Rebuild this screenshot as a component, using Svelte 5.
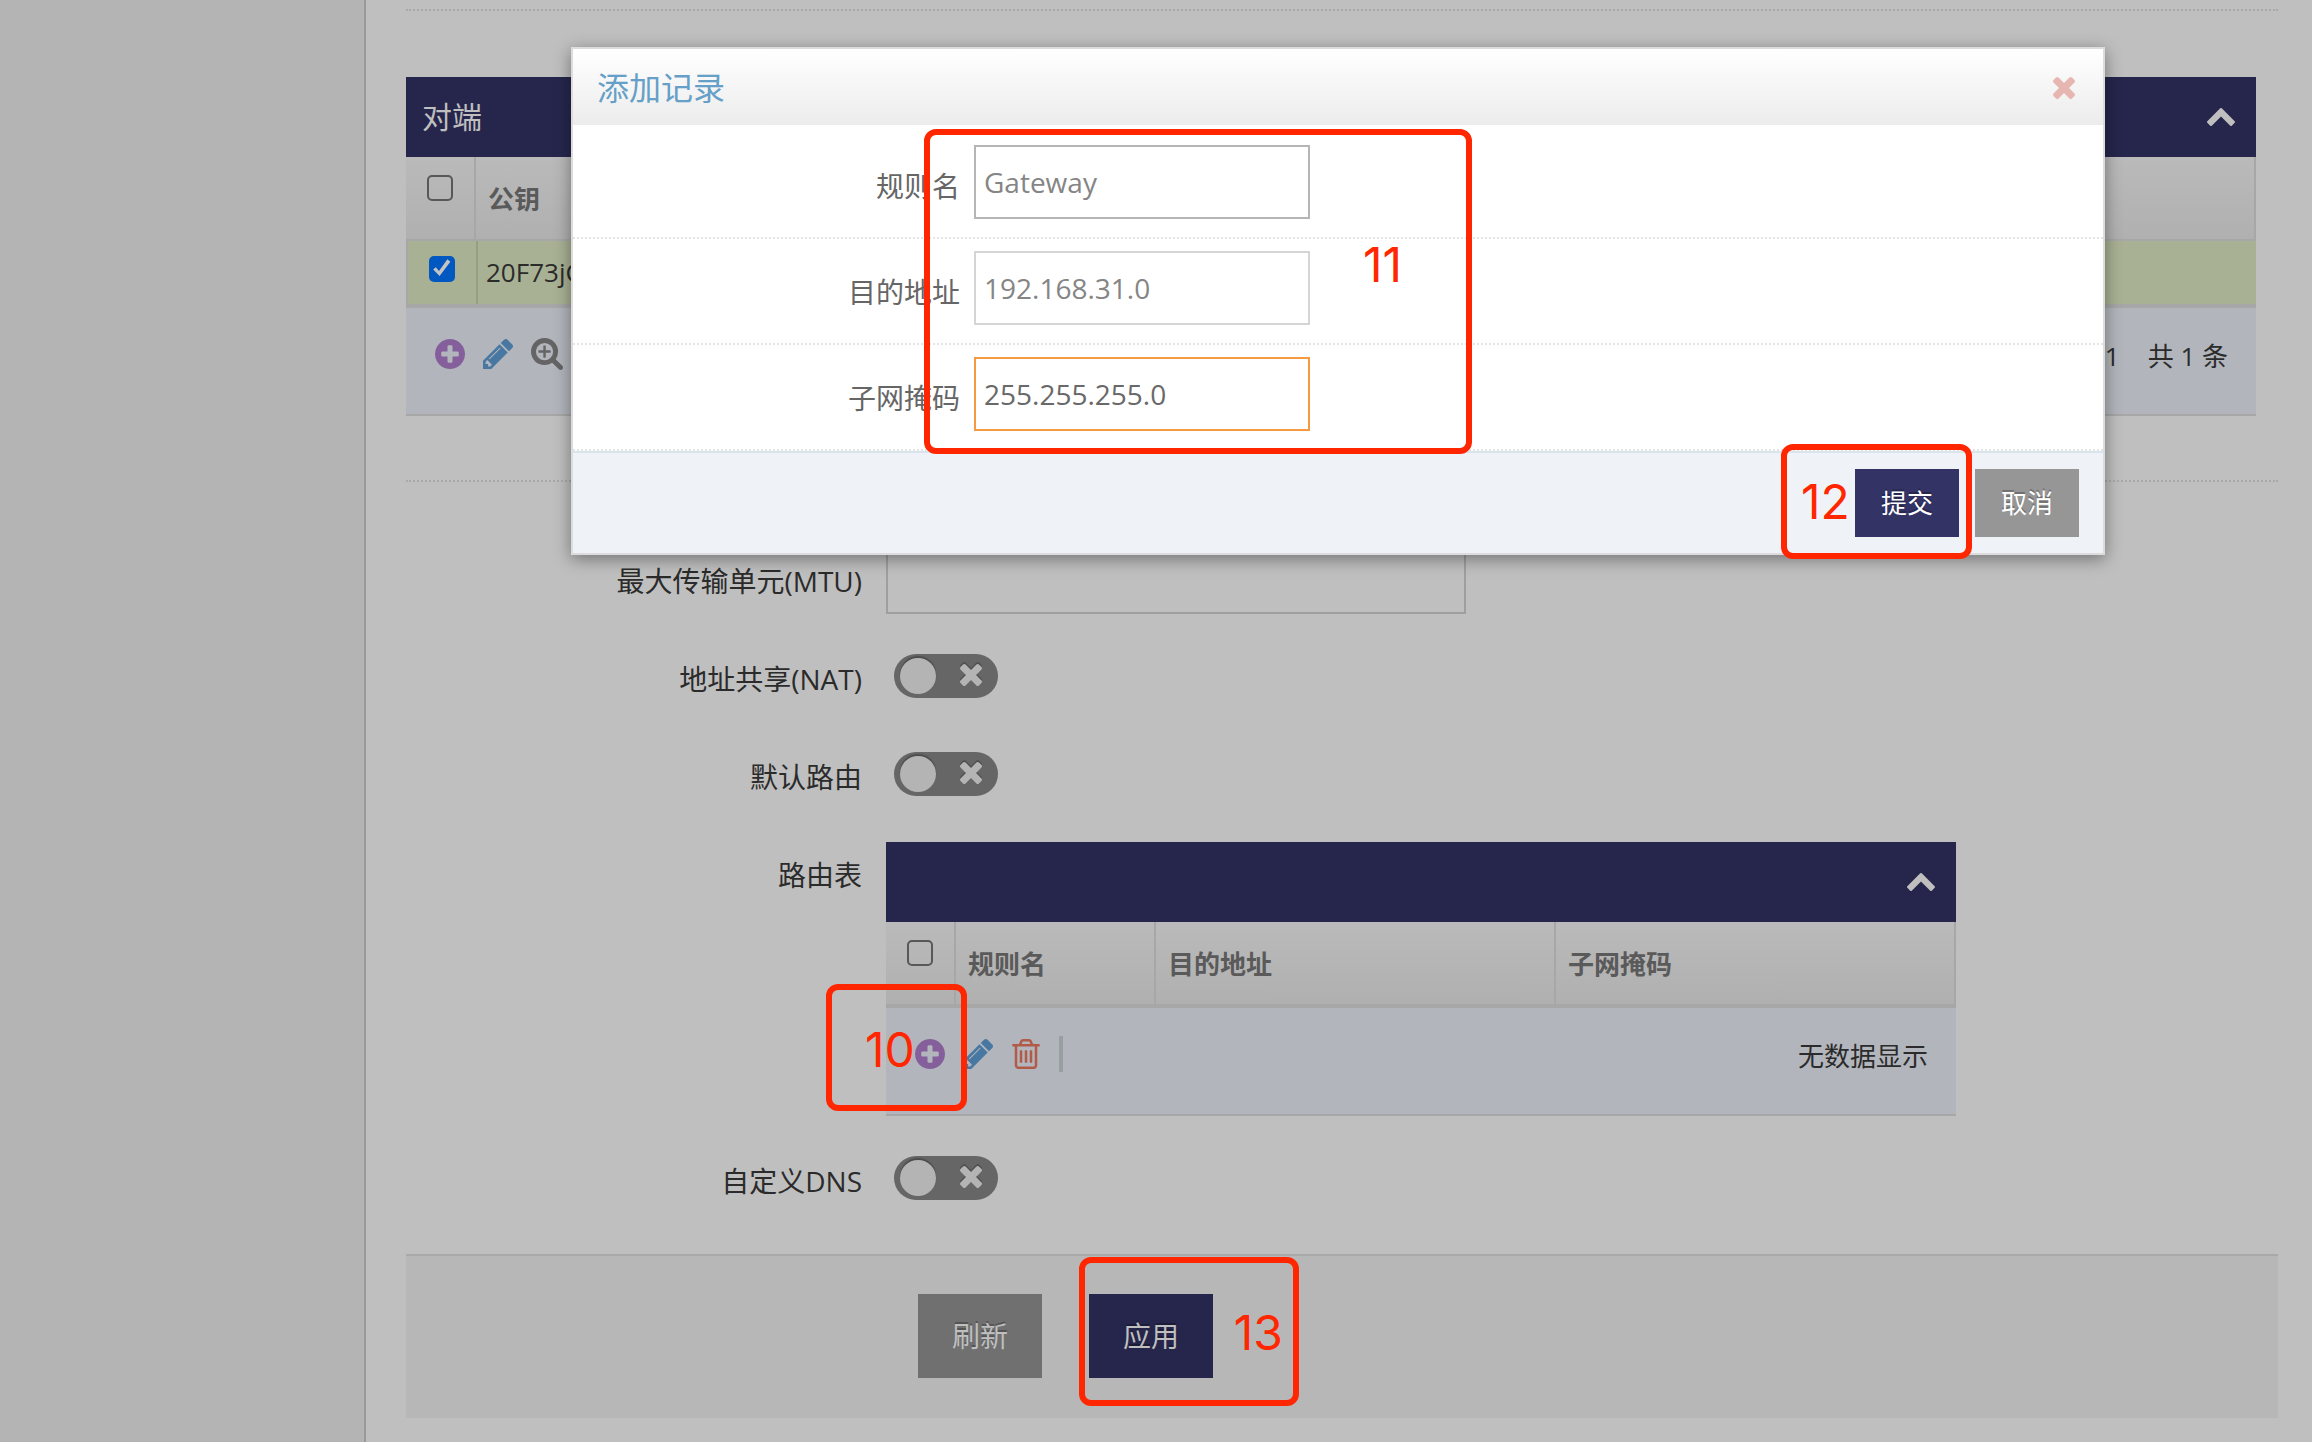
<script>
  const icons = {
    plus: {
      box: '128 128 1536 1536',
      d: 'M1344 960v-128q0-26-19-45t-45-19h-256v-256q0-26-19-45t-45-19h-128q-26 0-45 19t-19 45v256h-256q-26 0-45 19t-19 45v128q0 26 19 45t45 19h256v256q0 26 19 45t45 19h128q26 0 45-19t19-45v-256h256q26 0 45-19t19-45zm320-64q0 209-103 385.5t-279.5 279.5-385.5 103-385.5-103-279.5-279.5-103-385.5 103-385.5 279.5-279.5 385.5-103 385.5 103 279.5 279.5 103 385.5z'
    },
    pencil: {
      box: '128 149 1515 1515',
      d: 'M491 1536l91-91-235-235-91 91v107h128v128h107zm523-928q0-22-22-22-10 0-17 7l-542 542q-7 7-7 17 0 22 22 22 10 0 17-7l542-542q7-7 7-17zm-54-192l416 416-832 832h-416v-416zm683 96q0 53-37 90l-166 166-416-416 166-165q36-38 90-38 53 0 91 38l235 234q37 39 37 91z'
    },
    trash: {
      box: '192 128 1408 1536',
      d: 'M704 736v576q0 14-9 23t-23 9h-64q-14 0-23-9t-9-23v-576q0-14 9-23t23-9h64q14 0 23 9t9 23zm256 0v576q0 14-9 23t-23 9h-64q-14 0-23-9t-9-23v-576q0-14 9-23t23-9h64q14 0 23 9t9 23zm256 0v576q0 14-9 23t-23 9h-64q-14 0-23-9t-9-23v-576q0-14 9-23t23-9h64q14 0 23 9t9 23zm128 724v-948h-896v948q0 22 7 40.5t14.5 27 10.5 8.5h832q3 0 10.5-8.5t14.5-27 7-40.5zm-672-1076h448l-48-117q-7-9-17-11h-317q-10 2-17 11zm928 32v64q0 14-9 23t-23 9h-96v948q0 83-47 143.5t-113 60.5h-832q-66 0-113-58.5t-47-141.5v-952h-96q-14 0-23-9t-9-23v-64q0-14 9-23t23-9h309l70-167q15-37 54-63t79-26h320q40 0 79 26t54 63l70 167h309q14 0 23 9t9 23z'
    },
    zoom: {
      box: '64 128 1664 1664',
      d: 'M1088 800v64q0 13-9.5 22.5t-22.5 9.5h-224v224q0 13-9.5 22.5t-22.5 9.5h-64q-13 0-22.5-9.5t-9.5-22.5v-224h-224q-13 0-22.5-9.5t-9.5-22.5v-64q0-13 9.5-22.5t22.5-9.5h224v-224q0-13 9.5-22.5t22.5-9.5h64q13 0 22.5 9.5t9.5 22.5v224h224q13 0 22.5 9.5t9.5 22.5zm128 32q0-185-131.5-316.5t-316.5-131.5-316.5 131.5-131.5 316.5 131.5 316.5 316.5 131.5 316.5-131.5 131.5-316.5zm512 832q0 53-37.5 90.5t-90.5 37.5q-54 0-90-38l-343-342q-179 124-399 124-143 0-273.5-55.5t-225-150-150-225-55.5-273.5 55.5-273.5 150-225 225-150 273.5-55.5 273.5 55.5 225 150 150 225 55.5 273.5q0 220-124 399l343 343q37 37 37 90z'
    },
    times: {
      box: '302 366 1188 1188',
      d: 'M1490 1322q0 40-28 68l-136 136q-28 28-68 28t-68-28l-294-294-294 294q-28 28-68 28t-68-28l-136-136q-28-28-28-68t28-68l294-294-294-294q-28-28-28-68t28-68l136-136q28-28 68-28t68 28l294 294 294-294q28-28 68-28t68 28l136 136q28 28 28 68t-28 68l-294 294 294 294q28 28 28 68z'
    },
    up: {
      box: '90 480 1612 1035',
      d: 'M1683 1331l-166 165q-19 19-45 19t-45-19l-531-531-531 531q-19 19-45 19t-45-19l-166-165q-19-19-19-45.5t19-45.5l742-741q19-19 45-19t45 19l742 741q19 19 19 45.5t-19 45.5z'
    }
  };

  let peerSelected = $state(true);
  let allPeers = $state(false);
  let allRoutes = $state(false);
  let mtu = $state('');
  let options = $state({ nat: false, route: false, dns: false });
  let rule = $state({ name: 'Gateway', target: '192.168.31.0', mask: '255.255.255.0' });
</script>

{#snippet icon(name)}
  <svg class="icon {name}" viewBox={icons[name].box} aria-hidden="true"><path d={icons[name].d} /></svg>
{/snippet}

{#snippet toggle(id)}
  <span class="toggle">
    <input type="checkbox" role="switch" {id} bind:checked={options[id]} />
    {@render icon('times')}
  </span>
{/snippet}

<div class="page">
  <aside class="sidebar"></aside>

  <main class="content">
    <hr class="divider" />

    <section class="grid peers">
      <header class="grid-title">
        <h2>对端</h2>
        <button class="plain" aria-label="折叠">{@render icon('up')}</button>
      </header>
      <table>
        <colgroup><col class="col-check" /><col /></colgroup>
        <thead>
          <tr>
            <th><input class="tick" type="checkbox" aria-label="全选" bind:checked={allPeers} /></th>
            <th>公钥</th>
          </tr>
        </thead>
        <tbody>
          <tr class="selected">
            <td><input class="tick" type="checkbox" aria-label="选择" bind:checked={peerSelected} /></td>
            <td>20F73jC</td>
          </tr>
        </tbody>
      </table>
      <footer class="grid-footer">
        <div class="tools">
          <button class="plain" aria-label="添加">{@render icon('plus')}</button>
          <button class="plain" aria-label="编辑">{@render icon('pencil')}</button>
          <button class="plain" aria-label="查看">{@render icon('zoom')}</button>
        </div>
        <div class="summary"><span>1 - 1</span><span>共 1 条</span></div>
      </footer>
    </section>

    <hr class="divider" />

    <form class="settings" onsubmit={(e) => e.preventDefault()}>
      <div class="field">
        <label for="mtu">最大传输单元(MTU)</label>
        <input class="mtu" id="mtu" type="text" bind:value={mtu} />
      </div>
      <div class="field">
        <label for="nat">地址共享(NAT)</label>
        {@render toggle('nat')}
      </div>
      <div class="field">
        <label for="route">默认路由</label>
        {@render toggle('route')}
      </div>
      <div class="field">
        <span class="label" id="routes-label">路由表</span>
        <section class="grid routes" aria-labelledby="routes-label">
          <header class="grid-title">
            <span></span>
            <button type="button" class="plain" aria-label="折叠">{@render icon('up')}</button>
          </header>
          <table>
            <colgroup><col class="col-check" /><col class="col-name" /><col /><col /></colgroup>
            <thead>
              <tr>
                <th><input class="tick" type="checkbox" aria-label="全选" bind:checked={allRoutes} /></th>
                <th>规则名</th>
                <th>目的地址</th>
                <th>子网掩码</th>
              </tr>
            </thead>
          </table>
          <footer class="grid-footer">
            <div class="tools">
              <button type="button" class="plain" aria-label="添加">{@render icon('plus')}</button>
              <button type="button" class="plain" aria-label="编辑">{@render icon('pencil')}</button>
              <button type="button" class="plain" aria-label="删除">{@render icon('trash')}</button>
              <span class="separator"></span>
            </div>
            <div class="summary"><span>无数据显示</span></div>
            <div class="mark mark-10">10</div>
          </footer>
        </section>
      </div>
      <div class="field">
        <label for="dns">自定义DNS</label>
        {@render toggle('dns')}
      </div>
      <div class="actions">
        <button type="button" class="btn">刷新</button>
        <div class="marked">
          <button type="submit" class="btn primary">应用</button>
          <div class="mark mark-13">13</div>
        </div>
      </div>
    </form>
  </main>

  <div class="dialog" role="dialog" aria-labelledby="dialog-title">
    <header class="dialog-title">
      <h1 id="dialog-title">添加记录</h1>
      <button class="plain" aria-label="关闭">{@render icon('times')}</button>
    </header>
    <form onsubmit={(e) => e.preventDefault()}>
      <div class="rows">
        <div class="row">
          <label for="rule-name">规则名</label>
          <input class="hover" id="rule-name" type="text" bind:value={rule.name} />
        </div>
        <div class="row">
          <label for="rule-target">目的地址</label>
          <input id="rule-target" type="text" bind:value={rule.target} />
        </div>
        <div class="row">
          <label for="rule-mask">子网掩码</label>
          <input class="active" id="rule-mask" type="text" bind:value={rule.mask} />
        </div>
        <div class="mark mark-11">11</div>
      </div>
      <footer class="dialog-footer">
        <div class="marked">
          <button type="submit" class="btn primary">提交</button>
          <div class="mark mark-12">12</div>
        </div>
        <button type="button" class="btn">取消</button>
      </footer>
    </form>
  </div>
</div>

<style>
  :global(body) {
    margin: 0;
    background: #bfbfbf;
  }

  .page, .page * {
    box-sizing: border-box;
  }

  .page {
    position: relative;
    display: flex;
    min-height: 100vh;
    overflow: hidden;
    font-family: "Open Sans", "Noto Sans CJK SC", sans-serif;
    font-size: 26px;
    line-height: 36px;
    color: #2b2b2b;
    background: #bfbfbf;
  }

  .sidebar {
    flex: 0 0 366px;
    background: #b4b4b4;
    border-right: 2px solid #999;
  }

  .content {
    flex: 1;
    min-width: 0;
    padding: 9px 34px 24px 40px;
  }

  .divider {
    margin: 0;
    border: 0;
    border-top: 2px dotted #a9a9a9;
  }

  h1, h2 {
    margin: 0;
    font-weight: 400;
  }

  button, input {
    font: inherit;
  }

  .plain {
    display: flex;
    padding: 0;
    border: 0;
    color: inherit;
    background: none;
  }

  .icon {
    display: block;
    width: 30px;
    height: 30px;
    fill: currentColor;
  }

  .plus { color: #855f9b; }
  .pencil { color: #4878a2; }
  .trash { color: #b25a48; }
  .zoom { width: 32px; height: 32px; color: #646464; }

  /* data grids */
  .peers {
    margin: 66px 22px 64px 0;
  }

  .routes {
    flex: 0 1 1070px;
    margin-top: 8px;
  }

  .grid-title {
    display: flex;
    align-items: center;
    justify-content: space-between;
    height: 80px;
    padding: 0 21px 0 16px;
    background: #26264c;
    color: #bfbfbf;
  }

  .grid-title h2 {
    font-size: 30px;
    line-height: 40px;
  }

  .grid-title .up {
    width: 28px;
    height: 18px;
  }

  table {
    width: 100%;
    table-layout: fixed;
    border-collapse: separate;
    border-spacing: 0;
  }

  .col-check { width: 70px; }
  .col-name { width: 200px; }

  th, td {
    padding: 0 12px;
    text-align: left;
  }

  th {
    height: 84px;
    padding-top: 2px;
    color: #5a5a5a;
    font-weight: 700;
    background: linear-gradient(#bababa, #b0b0b0);
    border-right: 2px solid #a7a7a7;
    border-bottom: 2px solid #a7a7a7;
  }

  td {
    height: 63px;
    padding: 0 8px 2px;
    background: #a9b194;
  }

  td:first-child {
    border-left: 2px solid #a7a7a7;
  }

  td:last-child {
    border-left: 2px solid #979f80;
  }

  th:first-child, td:first-child {
    padding: 0 0 0 21px;
  }

  .tick {
    display: block;
    width: 26px;
    height: 26px;
    margin: 0 0 20px;
    appearance: none;
    border: 2px solid #585858;
    border-radius: 5px;
  }

  td .tick {
    margin-bottom: 8px;
  }

  .tick:checked {
    display: grid;
    place-items: center;
    border: 0;
    background: #0058c0;
  }

  .tick:checked::before {
    content: "";
    width: 20px;
    height: 20px;
    background: #c4c4c4;
    clip-path: polygon(6% 55%, 19% 44%, 35% 63%, 77% 4%, 92% 16%, 38% 88%);
  }

  .grid-footer {
    position: relative;
    display: flex;
    justify-content: space-between;
    height: 110px;
    padding: 28px 28px 0 29px;
    background: #b2b6bc;
    border-bottom: 2px solid #a7a7a7;
    border-top: 2px solid #a7a7a7;
  }

  .peers .grid-footer {
    height: 112px;
    border-top-width: 4px;
  }

  .tools {
    display: flex;
    align-items: center;
    gap: 18px;
    height: 36px;
  }

  .tools .plain {
    min-width: 30px;
    justify-content: center;
  }

  .separator {
    width: 4px;
    height: 36px;
    background: #979fa1;
  }

  .summary {
    display: flex;
    gap: 28px;
    padding-top: 2px;
  }

  /* settings form */
  .settings {
    display: flex;
    flex-direction: column;
    gap: 24px;
    padding-top: 58px;
  }

  .field {
    display: flex;
    gap: 24px;
    min-height: 74px;
    font-size: 28px;
  }

  .field > label, .label {
    flex: 0 0 456px;
    padding-top: 23px;
    text-align: right;
  }

  .routes {
    font-size: 26px;
  }

  .mtu {
    flex: 0 1 580px;
    min-width: 0;
    height: 74px;
    padding: 0 10px;
    background: #bfbfbf;
    border: 2px solid #9f9f9f;
  }

  .toggle {
    display: grid;
    align-self: flex-start;
    align-items: center;
    margin: 16px 8px 0;
  }

  .toggle input, .toggle .icon {
    grid-area: 1 / 1;
  }

  .toggle input {
    width: 104px;
    height: 44px;
    margin: 0;
    padding: 4px 6px;
    appearance: none;
    border-radius: 22px;
    background: #666;
  }

  .toggle input::before {
    content: "";
    display: block;
    width: 36px;
    height: 36px;
    border-radius: 50%;
    background: #b4b4b4;
    box-shadow: 0 -2px 1px #4d4d4d;
  }

  .toggle .icon {
    justify-self: end;
    width: 22px;
    height: 22px;
    margin: 0 16px 2px 0;
    color: #b4b4b4;
    pointer-events: none;
    filter: drop-shadow(0 -2px 0 #505050);
  }

  .actions {
    display: flex;
    gap: 47px;
    margin-top: 16px;
    padding: 38px 24px 40px 512px;
    background: #b7b7b7;
    border-top: 2px solid #a9a9a9;
  }

  .marked {
    position: relative;
  }

  .btn {
    display: block;
    width: 104px;
    height: 68px;
    padding: 0;
    border: 0;
    color: #fff;
    background: #969696;
    text-shadow: 0 -2px 0 rgba(0, 0, 0, 0.25);
  }

  .btn.primary {
    background: #333366;
  }

  .actions .btn {
    width: 124px;
    height: 84px;
    font-size: 28px;
    color: #bfbfbf;
    background: #707070;
  }

  .actions .btn.primary {
    background: #26264c;
  }

  /* dialog */
  .dialog {
    position: absolute;
    top: 47px;
    left: 571px;
    right: 207px;
    color: #666;
    font-size: 28px;
    background: #fff;
    border: 2px solid #dcdcdc;
    box-shadow: 0 4px 16px rgba(0, 0, 0, 0.4);
  }

  .dialog-title {
    display: flex;
    align-items: center;
    justify-content: space-between;
    height: 76px;
    padding: 2px 28px 0 24px;
    background: linear-gradient(#fff, #ececec);
  }

  .dialog-title h1 {
    font-size: 32px;
    line-height: 44px;
    color: #669fc7;
  }

  .dialog-title .times {
    width: 22px;
    height: 22px;
    color: #e7b6b0;
  }

  .rows {
    position: relative;
    padding-top: 8px;
  }

  .row {
    display: flex;
    align-items: center;
    gap: 14px;
    padding: 12px 0 18px;
    border-bottom: 2px dotted #e4e4e4;
  }

  .row label {
    flex: 0 0 387px;
    padding-top: 8px;
    text-align: right;
  }

  .row input {
    flex: 0 1 336px;
    min-width: 0;
    height: 74px;
    padding: 0 8px;
    color: #858585;
    background: #fff;
    border: 2px solid #d5d5d5;
    outline: 0;
  }

  .row input.hover {
    border-color: #b5b5b5;
  }

  .row input.active {
    color: #696969;
    border-color: #f59942;
  }

  .dialog-footer {
    display: flex;
    justify-content: flex-end;
    gap: 16px;
    padding: 16px 24px;
    font-size: 26px;
    background: #eff3f8;
    border-top: 2px solid #d9e4ec;
  }

  /* numbered step marks */
  .mark {
    position: absolute;
    display: flex;
    align-items: center;
    border: 6px solid #ff2600;
    border-radius: 12px;
    color: #ff2600;
    font-family: Inter, "Liberation Sans", sans-serif;
    font-size: 48px;
    line-height: 56px;
    pointer-events: none;
  }

  .mark-10 {
    top: -24px;
    left: -60px;
    width: 141px;
    height: 127px;
    padding: 4px 0 0 33px;
  }

  .mark-11 {
    top: 4px;
    left: 351px;
    width: 548px;
    height: 325px;
    padding: 0 64px 54px 0;
    justify-content: flex-end;
  }

  .mark-12 {
    top: -25px;
    right: -13px;
    width: 191px;
    height: 115px;
    padding-left: 14px;
  }

  .mark-13 {
    top: -37px;
    left: -10px;
    width: 220px;
    height: 149px;
    padding: 2px 10px 0 0;
    justify-content: flex-end;
  }
</style>
